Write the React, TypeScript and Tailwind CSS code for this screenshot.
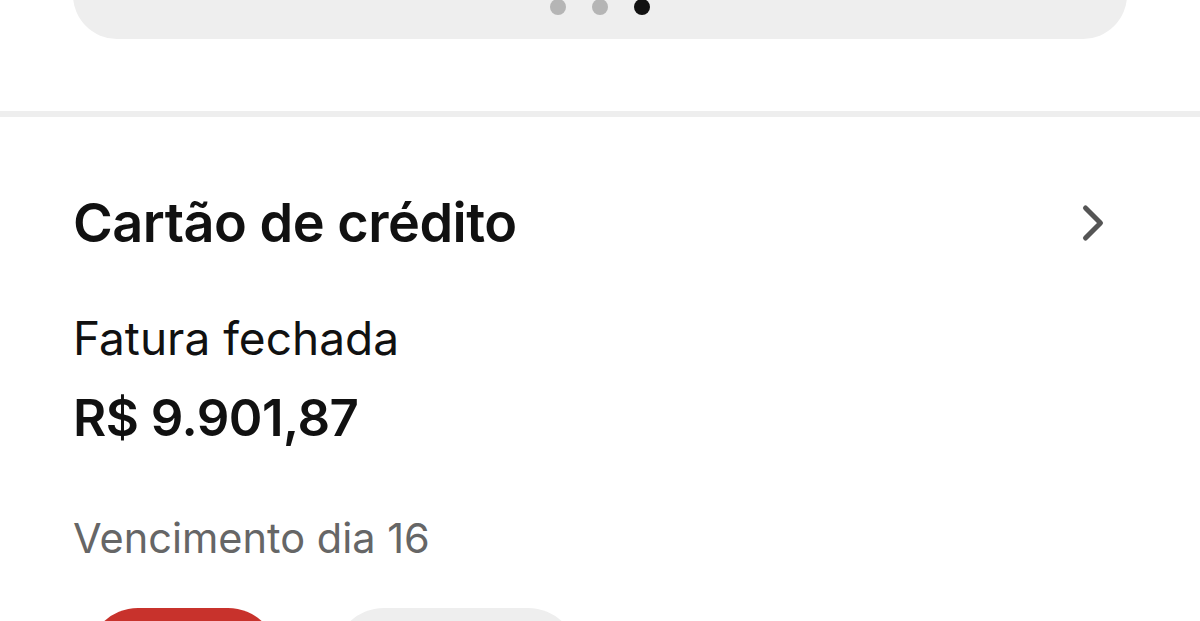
import { ChevronRight } from "lucide-react";

export default function App() {
  return (
    <div
      className="w-[1200px] h-[621px] overflow-hidden bg-white text-[#111111]"
      style={{ fontFamily: "Inter, 'Noto Sans', sans-serif" }}
    >
      {/* carousel card, only the bottom edge is visible */}
      <div className="mx-[73px] -mt-[160px] h-[199px] rounded-[44px] bg-[#eeeeee] flex items-end justify-center gap-[26px] pb-[24px]">
        <span className="w-[16px] h-[16px] rounded-full bg-[#b5b5b5]" />
        <span className="w-[16px] h-[16px] rounded-full bg-[#b5b5b5]" />
        <span className="w-[16px] h-[16px] rounded-full bg-[#111111]" />
      </div>

      <div className="mt-[72px] h-[6px] bg-[#eeeeee]" />

      <div className="px-[73px] pt-[76px]">
        <div className="flex items-center justify-between">
          <h2 className="text-[54px] leading-[60px] font-semibold tracking-[-0.5px]">Cartão de crédito</h2>
          <ChevronRight className="w-[60px] h-[60px] text-[#555555] mr-[4px]" strokeWidth={2} />
        </div>

        <p className="mt-[57px] text-[46px] leading-[56px] font-normal">Fatura fechada</p>
        <p className="mt-[22px] text-[51px] leading-[60px] font-semibold tracking-[-0.5px]">R$ 9.901,87</p>

        <p className="mt-[64px] text-[41.5px] leading-[52px] text-[#666666]">Vencimento dia 16</p>

        <div className="mt-[44px] flex gap-[56px] pl-[15px]">
          <div className="w-[190px] h-[100px] rounded-full bg-[#c8322c]" />
          <div className="w-[244px] h-[100px] rounded-full bg-[#eeeeee]" />
        </div>
      </div>
    </div>
  );
}
